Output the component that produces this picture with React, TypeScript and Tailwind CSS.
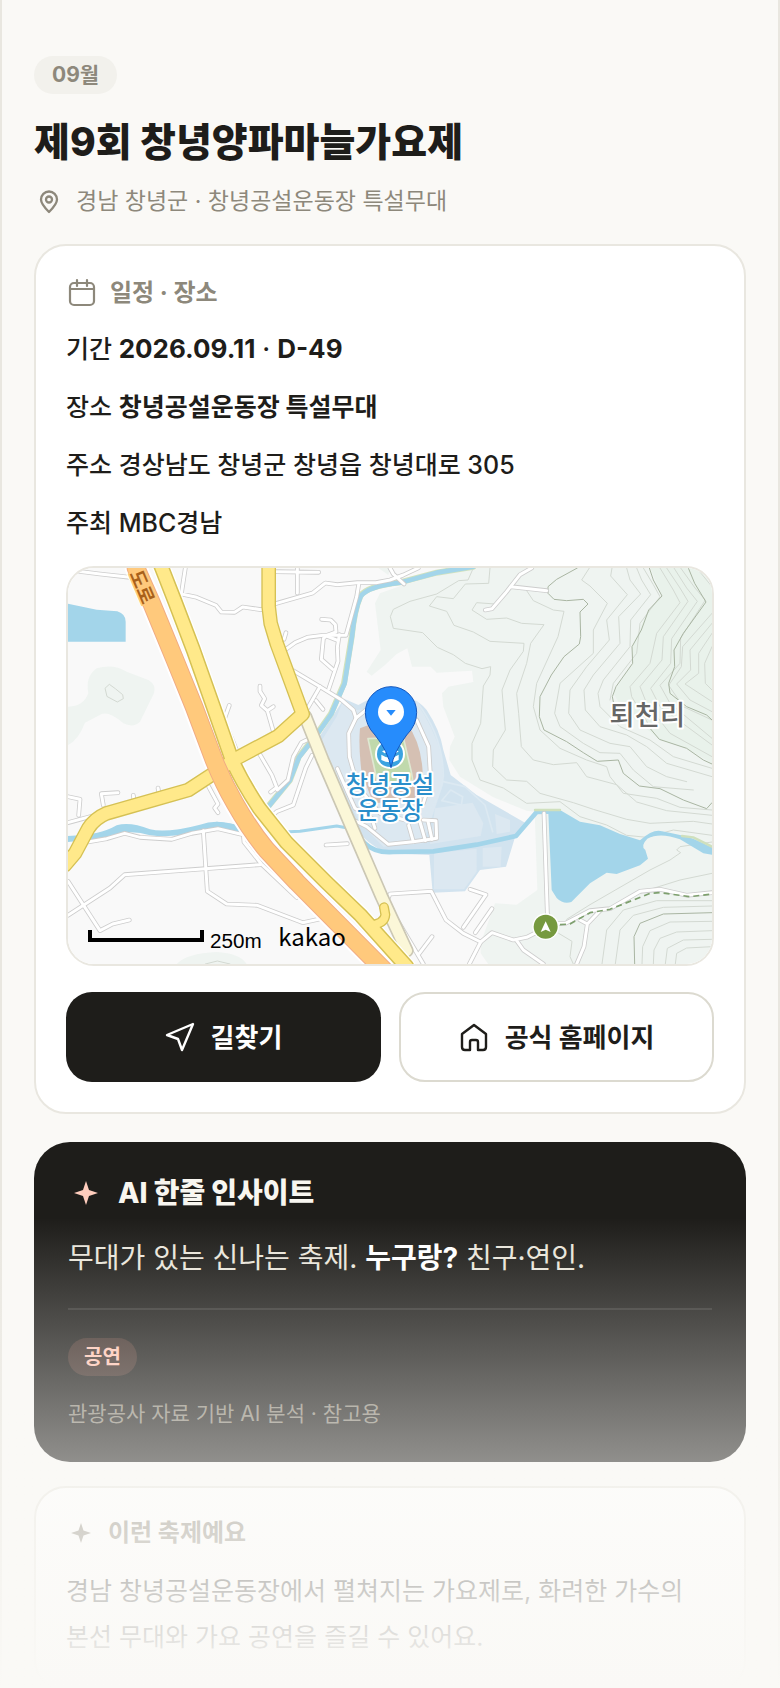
import React from 'react';

interface InfoRow {
  label: string;
  value: React.ReactNode;
}

const infoRows: InfoRow[] = [
  {
    label: '기간',
    value: <span className="text-[26px]"><strong className="font-bold">2026.09.11</strong> · <strong className="font-bold">D-49</strong></span>,
  },
  { label: '장소', value: <strong className="font-bold">창녕공설운동장 특설무대</strong> },
  { label: '주소', value: '경상남도 창녕군 창녕읍 창녕대로 305' },
  { label: '주최', value: 'MBC경남' },
];

// ---- Map data (3 units = 1px) ----

// Narrow white streets
const streets = [
  'M24 30 L120 42 L210 52 L232 84',
  'M376 24 L364 102 L410 112 L468 136 L484 156 L524 157 L548 141 L604 149 L650 130 L758 99 L796 69 L832 74 L892 68 L948 68 L990 60 L1030 45 L1075 24',
  'M650 35 L776 37 M712 24 L712 99',
  'M678 218 L672 238',
  'M680 266 L705 248 L742 232 L790 226 L858 226 L890 110 L896 74',
  'M785 178 L812 180 L826 194 L828 216 L800 226 L790 236 L784 298 L818 328',
  'M838 224 L832 262 L834 304 L806 388 M800 228 L834 242',
  'M700 332 L780 380 L845 420 L880 450 L888 474 L918 450',
  'M780 380 L742 446 M768 422 L789 448',
  'M600 378 L600 394 L614 416 L604 436 L622 452 L640 440 M622 452 L640 514',
  'M508 436 L492 480 L534 582',
  'M600 584 L636 646 L650 682 L632 696',
  'M750 535 L724 548 L700 590 L684 660 L652 690',
  'M756 586 L738 622 L700 735 L650 755 L632 772',
  'M446 680 L474 732 L464 744 L474 758',
  'M174 698 L124 701 L130 736 M220 706 L222 722 M294 684 L298 704',
  'M24 710 L60 718 L56 766 M24 788 L90 770',
  'M70 848 L140 836 L194 820 L240 832 L335 838 L395 820 L474 806 L550 824 L552 846 L604 912 L710 1012',
  'M430 812 L442 994 L500 1032 L592 1036 L728 1088 L776 1078',
  'M24 1066 L150 984 L194 944 L600 914',
  'M24 964 L120 1112 L158 1092 L208 1080',
  'M798 855 L862 851',
  'M832 626 L860 690 L885 745 L935 775 L945 805',
  'M880 780 L920 800 L985 853 L1060 845 L1130 835 L1128 782 L1090 780',
  'M1046 796 L1060 845 M1080 786 L1096 842 M1104 784 L1116 838',
  'M888 474 L866 520 L868 590 L894 680 L960 760 L1035 780 L1090 730 L1112 660 L1106 560 L1070 480',
  'M984 1016 L990 1002 L1114 994 L1158 1080 L1210 1120 L1262 1146 L1228 1212',
  'M976 1020 L1090 1212 M1078 1180 L1116 1130',
  'M1230 988 L1278 1004 L1210 1102 M1296 1046 L1246 1118',
  'M1262 1146 L1296 1118 L1360 1140 L1400 1132 L1440 1112 M1370 1142 L1390 1170 L1450 1212',
  'M1452 760 L1462 1060 L1478 1090 L1516 1090 L1590 1052 L1650 1046 L1740 994 L1800 988 L1880 1006 L1956 998',
  'M1560 1080 L1582 1092 L1572 1160 L1550 1212 M1582 1092 L1620 1052',
  'M1276 150 L1296 146 L1336 100 L1380 44 L1415 24 M1352 80 L1460 92',
  'M990 24 L1000 42 L1032 72',
];

// Thin contour lines of the hills on the right
const contours = [
  'M1240 24 L1224 60 L1196 62 L1130 102 L1050 124 L1000 148 L991 170 L1000 205 L1088 218 L1132 262 L1180 284 L1216 310 L1266 326 L1292 320 L1290 345 L1270 378 L1262 490 L1236 550 L1236 600 L1260 660 L1330 684 L1400 730 L1500 725 L1560 770 L1640 795 L1700 826 L1760 832 L1840 810 L1956 826',
  'M1290 24 L1286 70 L1216 72 L1180 116 L1130 110 L1108 138 L1160 154 L1182 196 L1240 216 L1290 244 L1392 250 L1390 274 L1350 330 L1326 390 L1336 510 L1300 570 L1298 620 L1340 660 L1400 664 L1440 700 L1540 728 L1600 748 L1700 778 L1770 790 L1900 784 L1956 792',
  'M1305 132 L1250 128 L1236 150 L1280 178 L1340 174 L1385 190 L1452 194 L1412 250 L1400 310 L1370 400 L1376 460 L1384 560 L1420 600 L1480 614 L1550 608 L1580 650 L1670 674 L1730 726 L1820 752 L1956 766',
  'M1400 92 L1420 122 L1480 150 L1512 154 L1494 230 L1430 370 L1420 440 L1440 510 L1500 565 L1580 600 L1640 620 L1650 650 L1690 700 L1790 715 L1860 742 L1956 750',
  'M1588 24 L1565 60 L1590 78 L1642 130 L1600 210 L1600 280 L1500 370 L1484 460 L1500 500 L1570 550 L1620 578 L1680 580 L1720 630 L1780 680 L1900 690',
  'M1656 24 L1652 48 L1702 104 L1640 180 L1648 240 L1580 320 L1530 390 L1526 460 L1560 510 L1650 550 L1710 560 L1760 620 L1820 650 L1880 665',
  'M1700 24 L1710 60 L1742 102 L1676 170 L1680 250 L1600 345 L1572 390 L1576 450 L1620 500 L1700 525 L1760 560 L1820 610 L1956 650',
  'M1730 24 L1745 60 L1772 104 L1712 180 L1710 260 L1630 360 L1614 400 L1620 440 L1680 500 L1770 540 L1840 590 L1956 625',
  'M1750 24 L1780 74 L1800 110 L1740 190 L1730 280 L1660 370 L1650 420',
  'M1800 24 L1840 90 L1860 128 L1790 220 L1770 310 L1710 380 L1715 410 L1770 500',
  'M1820 24 L1860 84 L1884 124 L1810 230 L1806 300 L1740 380 L1760 430 L1830 520 L1956 590',
  'M1842 24 L1880 84 L1912 124 L1835 236 L1832 310 L1772 385 L1800 440 L1956 555',
  'M1862 24 L1905 84 L1936 120 L1862 234 L1860 310 L1800 376 L1830 430 L1956 535',
  'M1910 24 L1956 80 M1956 160 L1868 260 L1864 320 L1826 376 L1870 440 L1956 480',
  'M1956 190 L1890 270 L1892 330 L1850 372 L1890 420 L1956 455',
  'M1956 220 L1916 280 L1916 340 L1875 372 L1956 425',
  'M1956 260 L1934 310 L1936 370 L1956 390',
  'M1956 846 L1860 860 L1850 870 L1862 878 L1830 900 L1770 930 L1590 1034 L1520 1078',
  'M1956 940 L1860 960 L1780 985 L1700 1015',
  'M1956 1022 L1790 1022 L1690 1050 L1640 1110 L1626 1212',
  'M1956 1038 L1810 1042 L1720 1066 L1680 1110 L1666 1212',
  'M1956 1084 L1830 1086 L1770 1112 L1748 1160 L1746 1212',
  'M1956 1112 L1850 1116 L1800 1135 L1782 1170 L1780 1212',
  'M1956 1138 L1870 1140 L1822 1165 L1816 1212 M1956 1160 L1880 1164 L1850 1180 L1846 1212',
  'M1496 1120 L1536 1144 L1530 1190 L1540 1212',
  'M136 384 L148 373 L166 386 L188 404 L190 416 L172 426 L142 410 Z',
  'M436 1212 L472 1203 L510 1212',
];

const darkContours = [
  'M1552 24 L1490 58 L1464 80 L1464 100 L1482 118 L1520 122 L1570 118 L1584 132 L1560 156 L1562 230 L1558 252 L1512 290 L1474 345 L1440 410 L1438 470 L1452 510 L1520 545 L1570 578 L1612 604 L1675 600 L1690 640 L1738 678 L1800 686 L1870 720 L1940 746 L1956 728',
  'M1768 24 L1780 60 L1806 108 L1766 150 L1744 210 L1716 260 L1718 310 L1668 380 L1657 410 L1660 425 M1770 505 L1798 538 L1880 565 L1930 600 L1956 612',
  'M1885 24 L1904 70 L1938 126 L1870 220 L1842 270 L1844 320 L1826 370 L1830 400 L1880 440 L1940 465 L1956 480',
  'M1956 1058 L1810 1062 L1740 1090 L1722 1130 L1724 1212',
];

const orangeRoad = 'M228 24 L275 130 L345 300 L402 440 L462 600 Q490 670 525 730 Q570 810 620 870 L710 966 L972 1230';
const yellowMain = 'M300 10 L345 125 L400 270 L460 440 L516 600 Q545 665 598 745 L680 848 L800 968 L900 1064 L1040 1220';
const yellowBranch = 'M626 10 L626 140 L632 190 L650 250 L728 462 L655 528 L535 592 L385 690 L140 760 Q105 775 85 805 L45 880 L15 915';
const paleRoad = 'M736 470 L788 600 L965 1010 L1040 1172';

const FestivalMap: React.FC = () => (
  <svg viewBox="24 24 1932 1188" preserveAspectRatio="xMidYMid slice" className="block h-full w-full" role="img" aria-label="창녕공설운동장 지도" fill="none" strokeLinejoin="round" strokeLinecap="round">
    <rect x="0" y="0" width="2000" height="1240" fill="#f9f9f9" />

    {/* green areas */}
    <path d="M945 130 L960 100 L1030 75 L1230 20 L1960 20 V1220 L1290 1220 L1262 1180 L1262 1150 L1305 1030 L1370 1034 L1432 990 L1424 755 L1400 752 L1300 712 L1200 650 L1168 600 L1170 560 L1184 530 L1150 440 L1146 400 L1165 380 L1240 366 L1236 332 L1130 338 L1112 320 L1056 320 L1042 265 L1010 282 L975 315 L935 347 L920 335 L962 270 Z" fill="#eff4f1" />
    <path d="M1770 20 L1806 108 L1760 160 L1716 260 L1718 310 L1660 400 L1690 450 L1798 538 L1880 565 L1960 612 V20 Z" fill="#e9f2eb" />
    <path d="M24 440 Q70 440 85 400 Q75 350 110 325 Q160 310 200 335 L265 360 Q290 375 282 400 L240 485 Q220 505 190 490 Q150 455 125 462 L75 488 Q55 540 24 555 Z" fill="#eff4f1" />
    <path d="M350 1212 Q380 1180 470 1176 Q540 1180 560 1212 Z M955 24 L990 24 L985 45 Z" fill="#eff4f1" />
    {contours.map((d) => <path key={d} d={d} stroke="#d3d9d2" strokeWidth="3" />)}
    {darkContours.map((d) => <path key={d} d={d} stroke="#a9b5a2" strokeWidth="3" />)}

    {/* stadium grounds */}
    <path d="M852 416 L895 435 L960 400 Q1060 400 1100 450 Q1140 510 1150 570 L1172 645 L1250 705 L1395 788 L1365 832 L1338 920 L1260 930 L1215 994 L1118 998 L1108 885 L980 880 Q920 850 880 800 L800 640 L768 545 Z" fill="#d2e3ef" />
    <path d="M848 425 L890 450 L1070 430 Q1120 500 1146 590 L1150 670 L1090 850 L970 860 L900 790 L780 550 L830 470 Z" fill="#dce8f1" />
    <path d="M1125 745 L1238 728 L1270 790 L1262 828 L1110 852 Z M1305 762 L1350 780 L1350 815 L1310 822 Z M1122 880 L1250 866 L1250 935 L1212 988 L1122 988 Z M1268 864 L1325 860 L1322 920 L1268 920 Z" fill="#dce8f1" />
    <path d="M1070 425 Q1150 530 1150 650 Q1140 720 1100 760 M1150 665 L1215 680 L1275 735 L1298 815 M1172 690 L1208 710 L1204 735 L1145 722 Z" stroke="#dce9f2" strokeWidth="5" />
    <path d="M900 505 L940 490 L1040 490 Q1085 550 1088 640 L1065 720 L940 730 L905 640 Q895 560 900 505 Z" fill="#d5c0b3" />
    <path d="M924 536 L1030 532 L1055 640 L1058 660 L955 680 Z" fill="#c0d9ac" stroke="#dfe8d2" strokeWidth="5" />

    {/* water */}
    <path d="M24 131 L110 149 L172 154 Q197 162 197 185 V245 H24 Z" fill="#a3d5ea" />
    <path d="M1240 20 L1130 38 L1020 67 Q920 79 901 108 Q883 150 875 230 L852 370 L813 461 L771 521 L716 591 L690 660 L623 741 L602 800" stroke="#d2e2bd" strokeWidth="18" />
    <g stroke="#a3d5ea" strokeWidth="14">
      <path d="M1240 20 L1130 38 L1020 68 Q920 80 902 110 Q884 150 876 230 L854 370 L814 462 L772 522 L717 592 L690 660 L624 742 L602 800" />
      <path d="M24 836 L100 828 L210 800 L300 822 L400 808 L470 790 L540 800 L620 818 L720 814 L830 798 L875 806" strokeWidth="9" />
      <path d="M870 804 L915 850 Q945 880 1000 876 L1120 874 L1250 854 L1368 828 L1430 756 L1494 754" />
    </g>
    <path d="M24 828 Q120 826 170 796 Q210 784 270 808 Q320 820 420 794 Q480 772 560 806 L600 812 L560 822 Q470 795 400 820 Q330 834 270 826 Q200 804 150 834 L24 846 Z" fill="#a3d5ea" />
    <path d="M1425 750 L1500 750 L1560 785 L1620 796 L1680 822 L1740 841 Q1780 806 1806 814 Q1860 824 1900 836 L1956 862 V884 L1930 880 L1860 838 Q1800 816 1762 836 Q1740 858 1756 870 L1764 896 L1740 916 L1670 942 L1640 938 L1590 970 L1534 1026 Q1510 1034 1490 1014 L1475 990 L1465 760 L1430 760 Z" fill="#a3d5ea" />
    <path d="M1425 750 H1500 M1866 828 L1900 832 L1956 860" stroke="#cfe0bd" strokeWidth="7" />

    {/* streets: grey edge under white */}
    {streets.map((d) => <path key={d} d={d} stroke="#cdcdcd" strokeWidth="14" />)}
    {streets.map((d) => <path key={d} d={d} stroke="#ffffff" strokeWidth="9" />)}
    <path d="M1500 1094 L1530 1092 L1590 1058 L1650 1048 L1720 1020 L1770 1000 L1800 998 L1890 1010 L1956 1002" stroke="#7ea06e" strokeWidth="5" strokeDasharray="18 12" strokeLinecap="butt" />

    {/* main roads */}
    <path d={paleRoad} stroke="#cbc7b4" strokeWidth="42" />
    <path d={paleRoad} stroke="#fbf7d8" strokeWidth="32" />
    <path d={orangeRoad} stroke="#ffffff" strokeWidth="68" />
    <path d={yellowMain} stroke="#ffffff" strokeWidth="54" />
    <path d={yellowBranch} stroke="#d5c154" strokeWidth="44" />
    <path d={yellowMain} stroke="#d5c154" strokeWidth="46" />
    <path d="M972 1042 L976 1064 Q974 1092 930 1095" stroke="#d5c154" strokeWidth="30" />
    <path d="M972 1042 L976 1064 Q974 1092 930 1095" stroke="#ffe98a" strokeWidth="22" />
    <path d={yellowBranch} stroke="#ffe98a" strokeWidth="36" />
    <path d={yellowMain} stroke="#ffe98a" strokeWidth="37" />
    <path d={orangeRoad} stroke="#f1ac84" strokeWidth="56" />
    <path d={orangeRoad} stroke="#ffc97c" strokeWidth="50" />
    <text transform="translate(248 136) rotate(67)" textAnchor="end" fontSize="56" fontWeight="700" fill="#a9611a" stroke="#ffc97c" strokeWidth="10" paintOrder="stroke">도로</text>

    {/* stadium marker */}
    <circle cx="990" cy="582" r="45" fill="#ffffff" />
    <circle cx="990" cy="582" r="39" fill="#3ba3e0" />
    <path d="M964 584 q26 18 52 0 v16 q-26 14 -52 0 Z M966 574 q25 -14 50 0 l-8 6 q-17 -10 -34 0 Z" fill="#ffffff" />
    <g fontSize="72" fontWeight="500" fill="#2a8ecb" stroke="#ffffff" strokeWidth="12" paintOrder="stroke" textAnchor="middle">
      <text x="990" y="698">창녕공설</text>
      <text x="990" y="778">운동장</text>
    </g>
    <path d="M993 622 Q985 575 945 525 Q916 495 916 457 A77 77 0 0 1 1070 457 Q1070 495 1040 525 Q1002 575 993 622 Z" fill="#268cfc" stroke="#1558bd" strokeWidth="3" />
    <circle cx="993" cy="456" r="39" fill="#ffffff" />
    <path d="M979 450 H1007 L993 467 Z" fill="#268cfc" />

    {/* hill labels */}
    <text x="1762" y="494" fontSize="82" fontWeight="500" fill="#666666" stroke="#ffffff" strokeWidth="12" paintOrder="stroke" textAnchor="middle">퇴천리</text>
    <circle cx="1457" cy="1100" r="40" fill="#ffffff" />
    <circle cx="1457" cy="1100" r="36" fill="#76993f" />
    <path d="M1457 1084 L1472 1116 L1457 1109 L1442 1116 Z" fill="#ffffff" />

    {/* scale and provider */}
    <path d="M90 1110 V1140 H426 V1110" stroke="#000000" strokeWidth="12" strokeLinecap="butt" strokeLinejoin="miter" />
    <text x="450" y="1163" fontSize="62" fill="#000000" className="font-['Liberation_Sans',sans-serif]">250m</text>
    <text x="655" y="1157" fontSize="72" fill="#000000" className="font-['Noto_Sans_CJK_KR',sans-serif]">kakao</text>
  </svg>
);

// ---- Icons ----

const PinIcon = () => (
  <svg viewBox="0 0 28 28" className="size-7 shrink-0" fill="none" stroke="currentColor" strokeWidth="2.300" strokeLinejoin="round" aria-hidden="true">
    <path d="M15 25 C11 21 7 17 7 12.500 A8 8 0 0 1 23 12.500 C23 17 19 21 15 25 Z" />
    <circle cx="15" cy="12.500" r="3" />
  </svg>
);

const CalendarIcon = () => (
  <svg viewBox="0 0 32 32" className="size-8 shrink-0" fill="none" stroke="currentColor" strokeWidth="2.200" strokeLinecap="round" aria-hidden="true">
    <rect x="4" y="6" width="24" height="22" rx="4" />
    <path d="M4 12 H28 M11 3 V9 M21 3 V9" />
  </svg>
);

const SparkIcon: React.FC<{ className: string }> = ({ className }) => (
  <svg viewBox="0 0 24 24" className={className} fill="currentColor" aria-hidden="true">
    <path d="M12 0 L15 9 L24 12 L15 15 L12 24 L9 15 L0 12 L9 9 Z" />
  </svg>
);

const App: React.FC = () => {
  return (
    <div className="relative h-screen overflow-hidden bg-[#faf9f6] font-['Inter','Noto_Sans_CJK_KR',sans-serif] text-[#1e1d1a]">
      <main className="min-h-full border-x-2 border-[#e9e7e0] px-8 pt-14">
        <header>
          <span className="inline-flex h-[38px] items-center rounded-full bg-[#f2f1ec] px-[18px] align-top text-[21px] font-bold text-[#8d887b]">09월</span>
          <h1 className="mt-6 text-[39px] leading-12 font-extrabold">제9회 창녕양파마늘가요제</h1>
          <p className="mt-5 flex items-center gap-[14px] text-[23px] leading-[30px] text-[#8d887b]">
            <PinIcon />
            경남 창녕군 · 창녕공설운동장 특설무대
          </p>
        </header>

        {/* 일정 · 장소 */}
        <section className="mt-7 rounded-[32px] border-2 border-[#e9e7e0] bg-white p-[30px]">
          <h2 className="flex h-[34px] items-center gap-3 text-2xl font-bold text-[#8d887b]">
            <CalendarIcon />
            일정 · 장소
          </h2>
          <div className="mt-5 flex flex-col gap-5 text-[25px] leading-[38px] font-medium">
            {infoRows.map((row) => (
              <p key={row.label}>{row.label} {row.value}</p>
            ))}
          </div>

          <div className="mt-6 h-[400px] overflow-hidden rounded-[28px] border-2 border-[#e9e7e0]">
            <FestivalMap />
          </div>

          <div className="mt-[26px] grid grid-cols-2 gap-[18px] text-[26px] font-bold">
            <button type="button" className="flex h-[90px] items-center justify-center gap-4 rounded-[26px] bg-[#1e1d1a] text-white">
              <svg viewBox="0 0 30 30" className="size-[30px]" fill="none" stroke="currentColor" strokeWidth="2.400" strokeLinejoin="round" aria-hidden="true">
                <path d="M28 2 L2 13 L13 17 L17 28 Z" />
              </svg>
              길찾기
            </button>
            <button type="button" className="flex h-[90px] items-center justify-center gap-4 rounded-[26px] border-2 border-[#dcdad0] bg-white">
              <svg viewBox="0 0 30 30" className="size-[30px]" fill="none" stroke="currentColor" strokeWidth="2.400" strokeLinejoin="round" aria-hidden="true">
                <path d="M3 12 L15 3 L27 12 V25 Q27 28 24 28 H19 V20 Q19 18 17 18 H13 Q11 18 11 20 V28 H6 Q3 28 3 25 Z" />
              </svg>
              공식 홈페이지
            </button>
          </div>
        </section>

        {/* AI 인사이트 */}
        <section className="mt-7 rounded-[36px] bg-[#1e1d1a] p-[34px] text-[#e9e5da]">
          <h2 className="flex h-[34px] items-center gap-[14px] text-[28px] font-extrabold text-[#f8f6f0]">
            <span className="flex w-9 justify-center text-[#ffcdbd]"><SparkIcon className="size-6" /></span>
            AI 한줄 인사이트
          </h2>
          <p className="mt-[26px] text-[28px] leading-11">
            무대가 있는 신나는 축제. <strong className="font-bold text-white">누구랑?</strong> 친구·연인.
          </p>
          <hr className="mt-7 border-t-2 border-white/10" />
          <span className="mt-7 flex h-[38px] w-fit items-center rounded-full bg-[#ff9d80]/15 px-4 text-xl font-bold text-[#ffc5b3]">공연</span>
          <p className="mt-6 text-[21px] leading-7 text-[#8d887b]">관광공사 자료 기반 AI 분석 · 참고용</p>
        </section>

        {/* 축제 소개 */}
        <section className="mt-6 rounded-[32px] border-2 border-[#e9e7e0] bg-white p-[30px]">
          <h2 className="flex h-[30px] items-center gap-3 text-2xl font-bold text-[#8d887b]">
            <span className="flex w-[30px] justify-center"><SparkIcon className="size-5" /></span>
            이런 축제예요
          </h2>
          <p className="mt-5 text-[25px] leading-[46px] break-keep">
            경남 창녕공설운동장에서 펼쳐지는 가요제로, 화려한 가수의 본선 무대와 가요 공연을 즐길 수 있어요.
          </p>
        </section>
      </main>

      {/* fade-out over the bottom of the page */}
      <div className="pointer-events-none absolute inset-x-0 bottom-0 h-[470px] bg-linear-to-b from-[#faf9f6]/0 to-[#faf9f6]" />
    </div>
  );
};

export default App;
